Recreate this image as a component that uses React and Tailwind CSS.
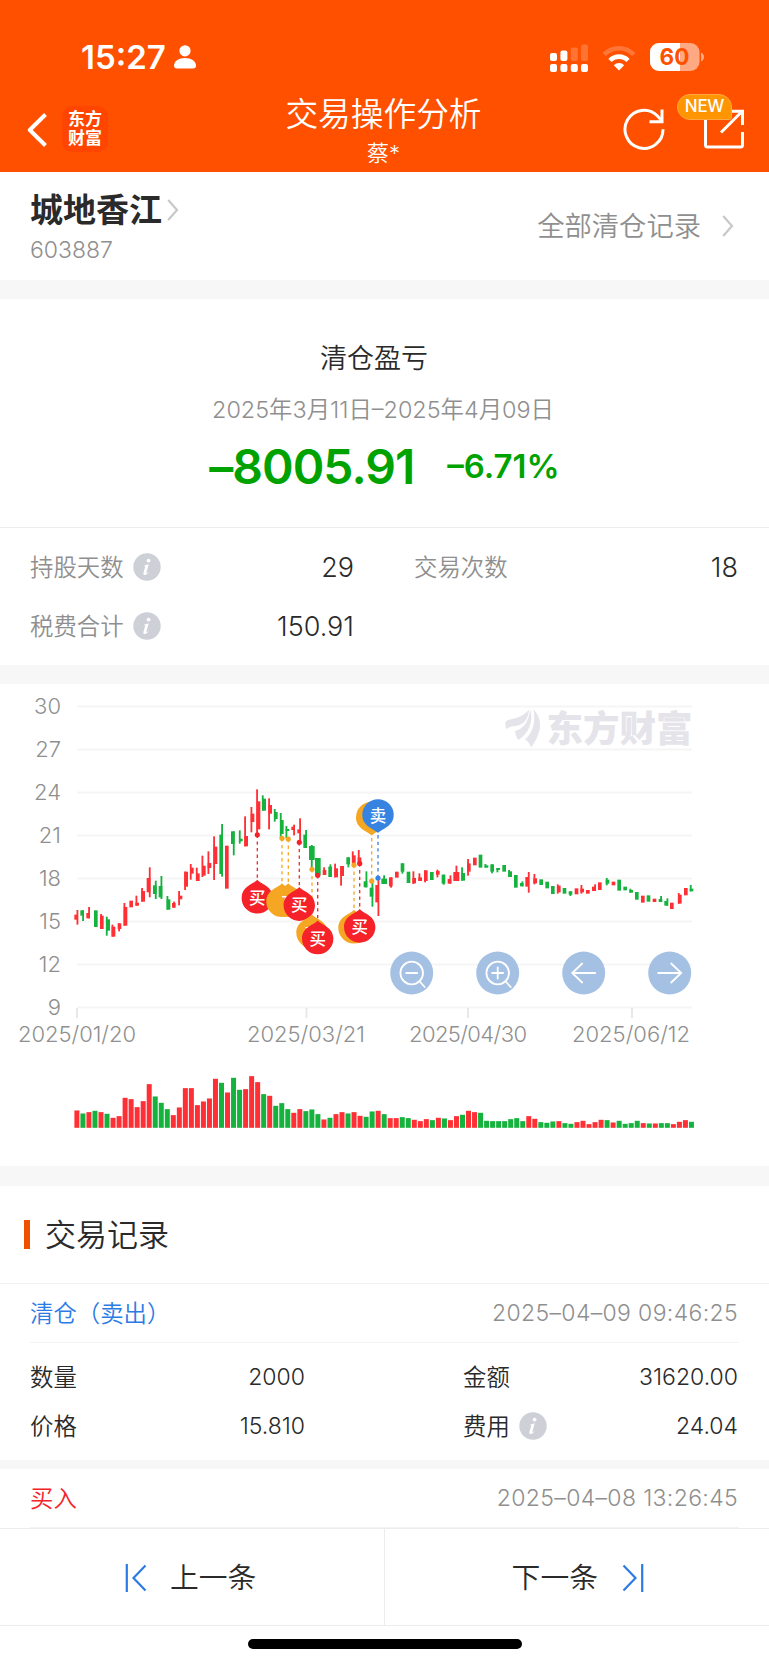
import React from 'react'

const RED = '#ff3035'
const GREEN = '#16b23e'

// [colour, x, top, bottom, wick x, wick top, wick bottom, width]
// Three units per pixel, each group is shifted right by dx
const candleGroups = [
    {
        dx: 180,
        bars: [
            ['r', 43, 434, 449, 52, 420, 464], ['g', 61, 421, 437, 69, 421, 453], ['r', 79, 429, 445, 87, 411, 445],
            ['g', 102, 421, 471], ['r', 120, 437, 477, 123, 432, 477], ['g', 139, 448, 482, 140, 440, 497],
            ['r', 155, 470, 500, 157, 464, 500], ['r', 173, 460, 477, 177, 460, 484], ['r', 191, 411, 467, 193, 399, 467],
            ['r', 208, 392, 412], ['r', 226, 398, 407, 229, 377, 407], ['r', 244, 363, 395, 246, 354, 395],
            ['r', 260, 324, 367, 269, 292, 382], ['g', 279, 346, 372, 287, 332, 387], ['g', 296, 348, 382, 304, 318, 387],
            ['g', 320, 388, 419, 322, 378, 419], ['r', 336, 399, 413, 342, 395, 413], ['r', 356, 377, 388, 357, 363, 406],
            ['r', 373, 305, 350, 375, 305, 360], ['r', 390, 293, 311, 392, 282, 329], ['r', 408, 310, 333, 410, 293, 333],
            ['r', 426, 287, 317, 427, 257, 321], ['r', 443, 279, 294, 445, 244, 312], ['r', 461, 230, 282, 462, 199, 330],
            ['g', 478, 194, 312, 486, 162, 320], ['r', 495, 227, 356], ['g', 513, 184, 222, 521, 184, 256],
            ['g', 537, 206, 214, 539, 181, 221], ['r', 553, 198, 229, 555, 139, 229], ['r', 572, 131, 156, 574, 111, 187],
            ['r', 590, 94, 178, 591, 58, 192],
        ],
    },
    {
        dx: 660,
        bars: [
            ['g', 127, 86, 122, 128, 76, 122], ['r', 145, 105, 131, 147, 85, 178], ['g', 162, 126, 147, 164, 117, 155],
            ['g', 180, 150, 192, 182, 129, 205], ['g', 197, 177, 183, 199, 168, 205], ['r', 214, 170, 180, 222, 164, 196],
            ['r', 232, 178, 190, 240, 145, 214], ['g', 250, 194, 234, 258, 180, 234], ['g', 267, 228, 270, 275, 225, 297, 17],
            ['g', 285, 264, 316, 293, 264, 316, 17], ['r', 308, 300, 315, 312, 292, 315], ['g', 325, 290, 321, 331, 283, 321],
            ['r', 343, 295, 322, 345, 281, 322], ['r', 361, 288, 318, 363, 288, 347], ['g', 379, 262, 283, 385, 262, 292],
            ['r', 396, 256, 280, 398, 244, 280], ['r', 413, 262, 282, 416, 240, 282], ['g', 431, 334, 352, 439, 304, 352],
            ['g', 449, 353, 380, 457, 333, 410], ['r', 466, 345, 397, 475, 330, 438], ['g', 484, 326, 342, 492, 316, 342, 17],
            ['r', 507, 322, 349, 513, 322, 353], ['r', 525, 305, 323],
        ],
    },
    {
        dx: 1200,
        bars: [
            ['g', 2, 280, 305, 7, 280, 311], ['g', 20, 305, 339], ['r', 37, 324, 340, 40, 304, 342], ['r', 55, 322, 333, 58, 310, 333],
            ['r', 72, 301, 333, 75, 301, 337], ['g', 90, 306, 330], ['r', 108, 303, 314, 112, 299, 322],
            ['g', 125, 314, 341, 131, 314, 344], ['r', 143, 327, 341, 151, 316, 341], ['r', 160, 306, 333, 169, 287, 333, 18],
            ['g', 184, 309, 332, 186, 292, 332], ['r', 201, 280, 305, 204, 267, 317], ['r', 219, 263, 286],
            ['g', 236, 254, 293], ['g', 254, 286, 293, 256, 282, 293], ['g', 271, 283, 305, 276, 283, 310],
            ['g', 289, 294, 300, 292, 294, 307], ['g', 307, 285, 305], ['g', 325, 304, 321, 327, 300, 321],
            ['g', 342, 315, 353], ['g', 360, 339, 349, 367, 334, 349], ['r', 376, 321, 350, 386, 306, 368],
            ['r', 400, 325, 340, 403, 312, 343], ['g', 418, 328, 345], ['g', 436, 335, 355], ['g', 453, 348, 372],
            ['r', 471, 347, 367, 473, 343, 371], ['g', 488, 354, 371], ['g', 506, 364, 374, 511, 364, 378],
            ['r', 524, 355, 373], ['r', 541, 356, 367, 544, 345, 371], ['r', 558, 360, 371], ['r', 576, 350, 363, 585, 343, 363],
            ['r', 594, 337, 360], ['g', 617, 329, 341, 620, 324, 346], ['r', 635, 335, 346], ['g', 652, 329, 362],
            ['g', 670, 350, 361], ['g', 688, 360, 368, 691, 356, 368], ['g', 705, 366, 389], ['r', 723, 377, 398],
            ['g', 740, 376, 395], ['r', 758, 386, 396], ['g', 776, 387, 396, 783, 378, 396], ['g', 793, 393, 407, 802, 385, 407],
            ['r', 810, 398, 417], ['r', 834, 374, 401, 836, 369, 401], ['r', 852, 354, 376], ['g', 869, 356, 364, 872, 345, 364],
        ],
    },
]

// Bar heights in thirds of a pixel
const volumes = (
    'r52 g43 r47 g51 r47 g42 r30 r35 r90 r86 r62 r80 r131 g94 g75 g56 r38 r61 r119 r119 r68 r79 r88 r147 g135 r106 ' +
    'g150 g114 r116 r155 r137 g101 r96 g66 g74 g56 r45 r56 g50 g55 g41 r25 g30 r41 r47 g43 r47 r36 g33 g49 r51 g41 ' +
    'r29 r29 g32 g29 r24 r20 r26 g23 r30 g28 r23 r35 g39 r51 r47 g45 g21 g20 g20 g20 g26 g29 g20 r35 r27 g17 g15 g19 ' +
    'r20 g14 g12 r17 r21 r11 r17 r24 g23 r16 g21 g12 g14 g21 r14 g13 r13 g14 g14 r11 r18 r23 g18'
).split(' ')

const gridLines = [
    [30, 706.5], [27, 749.5], [24, 792.5], [21, 835.5], [18, 878.5], [15, 921.5], [12, 964.5], [9, 1007.5],
]

// [label, tick x, text x]
const dates = [
    ['2025/01/20', 77, 77], ['2025/03/21', 306.5, 306], ['2025/04/30', 468, 468], ['2025/06/12', 632, 631],
]

// Order matters, later pins cover earlier ones
const pins = [
    { x: 257.3, y: 897.3, dot: 834.8, color: '#f5222a', label: '买' },
    { x: 282, y: 900.8, dot: 838.3, color: '#f5a623' },
    { x: 288.3, y: 900.8, dot: 839, color: '#f5a623', label: 'T' },
    { x: 299.3, y: 904.6, dot: 842.3, color: '#f5222a', label: '买' },
    { x: 312, y: 932, dot: 869.3, color: '#f5a623', label: 'T' },
    { x: 317.7, y: 938, dot: 875.3, color: '#f5222a', label: '买' },
    { x: 354, y: 927.2, dot: 865, color: '#f5a623' },
    { x: 359.7, y: 926.4, dot: 863.5, color: '#f5222a', label: '买' },
    { x: 371.7, y: 818, dot: 881, color: '#f5a623', down: true },
    { x: 378, y: 815.5, dot: 878, color: '#3683e2', label: '卖', down: true },
]

const BackIcon = () => (
    <svg width="20" height="34" viewBox="0 0 20 34" fill="none" stroke="white" strokeWidth="4">
        <path d="M18.5 1.5 2.8 17l15.7 15.5" strokeLinejoin="round" />
    </svg>
)

const Chevron = () => (
    <svg width="12" height="22" viewBox="0 0 12 22" fill="none" stroke="#c8c8c8" strokeWidth="2.2">
        <path d="M1.2 1 10 11 1.2 21" />
    </svg>
)

const InfoIcon = () => (
    <svg width="28" height="28" viewBox="0 0 28 28">
        <circle cx="14" cy="14" r="13.7" fill="#cdd0d7" />
        <circle cx="15.6" cy="7.6" r="1.9" fill="white" />
        <path d="M11.3 12.4c1.6 0 2.8-.5 3.9-1.1l.5.3-2.4 8.1c-.2.8.5.7 1.8-.5l.4.4c-1.5 1.8-2.9 2.5-4 2.3-1.1-.2-1.3-1.1-1-2.2l1.8-6.1-1.2-.5z" fill="white" />
    </svg>
)

const StatusBar = () => (
    <div className="flex h-[88px] items-end justify-between pb-[15px] pl-[81px] pr-[64px] text-white">
        <div className="flex items-center">
            <span className="w-[93px] pt-px text-[33px] font-semibold leading-8">15:27</span>
            <svg width="22" height="24" viewBox="0 0 22 24" fill="white">
                <circle cx="11" cy="5.8" r="5.6" />
                <path d="M0 20.5C0 16 5 13 11 13s11 3 11 7.500c0 2-1 3-3 3H3c-2 0-3-1-3-3z" />
            </svg>
        </div>
        <div className="flex items-center">
            <svg width="38" height="28" viewBox="0 0 38 28" fill="white">
                <rect x="0" y="9" width="7" height="8" rx="2" />
                <rect x="10.400" y="6.500" width="7" height="10.500" rx="2" />
                <rect x="20.800" y="3.500" width="7" height="13.500" rx="2" opacity=".2" />
                <rect x="31" y="0.500" width="7" height="16.500" rx="2" opacity=".2" />
                {[0, 10.4, 20.8, 31].map((x) => (
                    <rect key={x} x={x} y="20" width="7" height="8" rx="2" />
                ))}
            </svg>
            <svg className="ml-[14px]" width="34" height="26" viewBox="0 0 34 26" fill="none" stroke="white" strokeWidth="4.600">
                <path d="M2.200 9.500a20.500 20.500 0 0 1 29.600 0" opacity=".22" />
                <path d="M8 15.500a12.500 12.500 0 0 1 18 0" />
                <path d="M17 25.500 11.800 20.200a7.500 7.500 0 0 1 10.400 0z" fill="white" stroke="none" />
            </svg>
            <svg className="mb-[2px] ml-[14px]" width="55" height="28" viewBox="0 0 55 28">
                <clipPath id="battery">
                    <rect x="0" y="0" width="49.500" height="28" rx="9" />
                </clipPath>
                <g clipPath="url(#battery)">
                    <rect width="50" height="28" fill="#ffa982" />
                    <rect width="30" height="28" fill="white" />
                </g>
                <path d="M51 9.500c4 1.500 4 7.500 0 9z" fill="#ffa982" />
                <text x="24.500" y="22" textAnchor="middle" fontSize="22.500" fontWeight="650" fill="#ff5000">60</text>
            </svg>
        </div>
    </div>
)

const Header = () => (
    <header className="h-[172px] bg-[#ff5000] text-white">
        <StatusBar />
        <div className="flex h-[84px] justify-between">
            <div className="flex w-[240px] items-start pl-[27px] pt-[18px]">
                <div className="mt-[7px]"><BackIcon /></div>
                <div className="ml-[15px] flex h-[46px] w-[46px] flex-col items-center justify-center rounded-[10px] bg-[#ff4500] text-[17px] font-bold leading-[19px]">
                    <span>东方</span>
                    <span>财富</span>
                </div>
            </div>
            <div className="mr-[2px] flex flex-col items-center">
                <h1 className="mt-[5px] text-[32.700px] font-[350] leading-[42px]">交易操作分析</h1>
                <p className="mt-[6px] text-[22px] font-[350] leading-[24px]">蔡*</p>
            </div>
            <div className="relative flex w-[240px] justify-end gap-[38px] pr-[25px] pt-[20px]">
                <svg width="42" height="42" viewBox="0 0 42 42" fill="none" stroke="white" strokeWidth="3">
                    <path d="M40 21.200A19 19 0 1 1 34.500 8L39 13" />
                    <path d="M39 1.500v12.200H26.500" />
                </svg>
                <svg width="41" height="41" viewBox="0 0 41 41" fill="none" stroke="white" strokeWidth="3">
                    <path d="M2.500 10v27a2 2 0 0 0 2 2h33a2 2 0 0 0 2-2V24" />
                    <path d="M27 3.300h12.500V17M39.200 3.300 18 24.500" />
                </svg>
                <span className="absolute right-[37px] top-[6px] flex h-[26px] w-[55px] items-center justify-center rounded-[13px] rounded-br-[3px] border border-[#ffa940] bg-[#ff9500] text-[17px] font-medium tracking-[-0.3px]">
                    NEW
                </span>
            </div>
        </div>
    </header>
)

const Stat = ({ label, value, info }) => (
    <div className="flex h-[59px] items-center">
        <span className="text-[23.400px] font-[350] text-[#8f8f8f]">{label}</span>
        {info && <span className="mb-[2px] ml-[9px]"><InfoIcon /></span>}
        <span className="ml-auto pt-px text-[27px] font-[350]">{value}</span>
    </div>
)

const Pin = ({ x, y, color, label, down }) => (
    <g transform={`translate(${x} ${y})`}>
        <path
            d="M0-17.500C3-13.500 15.700-11 15.700.6A15.700 15.700 0 0 1-15.700.6C-15.700-11-3-13.500 0-17.500z"
            transform={down ? 'rotate(180)' : undefined}
            fill={color}
        />
        {label === 'T' && <text x="-2.500" y="5" textAnchor="middle" fontSize="13" fontWeight="500" fill="white">T</text>}
        {label && label !== 'T' && <text y="6.500" textAnchor="middle" fontSize="16.500" fontWeight="500" fill="white">{label}</text>}
    </g>
)

const RoundButton = ({ x, children }) => (
    <g transform={`translate(${x} 973)`} fill="none" stroke="white" strokeWidth="1.800" strokeLinecap="round">
        <circle r="21.500" fill="#a4c1e4" stroke="none" />
        {children}
    </g>
)

const TradeChart = () => (
    <svg width="769" height="482" viewBox="0 684 769 482" className="block">
        {/* grid + axis */}
        {gridLines.map(([value, y]) => (
            <g key={value}>
                <path d={`M77 ${y}H692`} stroke="#f5f5f5" strokeWidth="2" />
                <text x="61" y={y + 7.7} textAnchor="end" fontSize="22" fontWeight="350" fill="#8f8f8f">{value}</text>
            </g>
        ))}
        {dates.map(([label, tick, x]) => (
            <g key={label}>
                <path d={`M${tick} 1008v10`} stroke="#e8e8e8" strokeWidth="2" />
                <text x={x} y="1042" textAnchor="middle" fontSize="22" fontWeight="350" textLength="118" fill="#8f8f8f">{label}</text>
            </g>
        ))}

        {/* watermark */}
        <g fill="#e4e4ea">
            <path d="M505.700 721.500c5-4 14-1 23.500-12-1 10-6 16-14 16.500-4 .3-6 1-9 3-1-2-1-5-.5-7.500z" />
            <path d="M515 731c9-2 13-9 15.500-21.500 3 13-2 24-12 30.500-2-2-3-5-3.500-9z" />
            <path d="M533.500 709.500c10 10 8 24-2.500 38-1-4-3-6-6-8 8-7 11-17 8.500-30z" />
            <text x="546.500" y="742" fontSize="36.500" fontWeight="900" textLength="146">东方财富</text>
        </g>

        <g transform="translate(0 770) scale(.33333)">
            {candleGroups.map(({ dx, bars }) =>
                bars.map(([c, x, top, bottom, wx, wTop, wBottom, w = 11]) => (
                    <g key={dx + x} fill={c === 'r' ? RED : GREEN}>
                        <rect x={dx + x} y={top} width={w} height={bottom - top} />
                        {wx && <rect x={dx + wx - 2.5} y={wTop} width="5.500" height={wBottom - wTop} />}
                    </g>
                ))
            )}
        </g>

        {volumes.map((v, i) => {
            const h = Number(v.slice(1)) / 3
            return <rect key={i} x={74.4 + i * 6.025} y={1127.8 - h} width="5" height={h} fill={v[0] === 'r' ? RED : GREEN} />
        })}

        {pins.map((p) => (
            <g key={p.x}>
                <path d={`M${p.x} ${p.dot}V${p.y}`} stroke={p.color} strokeWidth="1.300" strokeDasharray="3.300 3.300" />
                <circle cx={p.x} cy={p.dot} r="2.600" fill={p.color} />
            </g>
        ))}
        {pins.map((p) => <Pin key={p.x} {...p} />)}

        <RoundButton x={411.7}>
            <circle r="11.300" />
            <path d="M-5.500 0h11M8 8.500l5 5.500" />
        </RoundButton>
        <RoundButton x={497.7}>
            <circle r="11.300" />
            <path d="M-5.500 0h11M0-5.500v11M8 8.500l5 5.500" />
        </RoundButton>
        <RoundButton x={583.7}>
            <path d="M11.500 0h-23M-1.500-9.500-11.500 0l10 9.500" />
        </RoundButton>
        <RoundButton x={669.7}>
            <path d="M-11.500 0h23M1.500-9.500 11.500 0l-10 9.500" />
        </RoundButton>
    </svg>
)

const RecordHead = ({ title, time, color }) => (
    <div className="mx-[30px] flex h-[59px] items-center justify-between border-b border-[#f3f3f3] pr-px pt-px">
        <span className={`text-[23.400px] font-[350] ${color}`}>{title}</span>
        <span className="text-[23px] font-[350] tracking-[0.35px] text-[#8f8f8f]">{time}</span>
    </div>
)

const RecordRow = ({ left, right, info }) => (
    <div className="flex h-[49px] items-center font-[350]">
        <div className="flex w-[275px] items-center justify-between">
            <span className="text-[23.400px]">{left[0]}</span>
            <span className="text-[23px]">{left[1]}</span>
        </div>
        <div className="ml-[158px] flex flex-1 items-center">
            <span className="text-[23.400px]">{right[0]}</span>
            {info && <span className="ml-[9px]"><InfoIcon /></span>}
            <span className="ml-auto text-[23px]">{right[1]}</span>
        </div>
    </div>
)

const App = () => {
    return (
        <div className="h-[1665px] w-[769px] overflow-hidden bg-white font-['Inter','Noto_Sans_CJK_SC',sans-serif] text-[#2a2a2a]">
            <Header />

            {/* Stock name */}
            <section className="flex h-[108px] items-start justify-between pl-[30px] pr-[35px]">
                <div>
                    <div className="mt-[16px] flex h-[44px] items-center">
                        <h2 className="text-[33px] font-bold leading-[44px]">城地香江</h2>
                        <span className="ml-[5px]"><Chevron /></span>
                    </div>
                    <p className="mt-[4px] text-[23px] font-[350] leading-[28px] text-[#8f8f8f]">603887</p>
                </div>
                <div className="mt-[37px] flex h-[36px] items-center">
                    <span className="mr-px text-[27.300px] font-[350] text-[#8f8f8f]">全部清仓记录</span>
                    <span className="mb-[2px] ml-[20px]"><Chevron /></span>
                </div>
            </section>
            <div className="h-[19px] bg-[#f7f7f7]" />

            {/* Profit and loss */}
            <section className="flex h-[229px] flex-col items-center border-b border-[#ececec]">
                <h3 className="mr-[21px] mt-[40px] text-[27px] font-[350] leading-[40px]">清仓盈亏</h3>
                <p className="mr-[3px] mt-[15px] text-[23.400px] font-[350] leading-[32px] text-[#8f8f8f]">2025年3月11日–2025年4月09日</p>
                <div className="mt-[11px] flex h-[60px] items-center gap-[33px] font-semibold text-[#00a200]">
                    <span className="text-[48px] tracking-[-1px]">–8005.91</span>
                    <span className="text-[33px]">–6.71%</span>
                </div>
            </section>
            <section className="grid h-[137px] grid-cols-2 content-start gap-x-[60px] pl-[30px] pr-[31px] pt-[10px]">
                <Stat label="持股天数" value="29" info />
                <Stat label="交易次数" value="18" />
                <Stat label="税费合计" value="150.91" info />
            </section>
            <div className="h-[19px] bg-[#f7f7f7]" />

            <TradeChart />
            <div className="h-[20px] bg-[#f7f7f7]" />

            {/* Records */}
            <section>
                <div className="flex h-[98px] items-center border-b border-[#f0f0f0] pl-[24px]">
                    <span className="h-[29px] w-[6px] bg-[#ee5000]" />
                    <h3 className="ml-[15px] mt-[2px] text-[31px] font-[350]">交易记录</h3>
                </div>
                <RecordHead title="清仓（卖出）" time="2025–04–09 09:46:25" color="text-[#2c7be5]" />
                <div className="h-[117px] pl-[30px] pr-[31px] pt-[10px]">
                    <RecordRow left={['数量', '2000']} right={['金额', '31620.00']} />
                    <RecordRow left={['价格', '15.810']} right={['费用', '24.04']} info />
                </div>
                <div className="h-[9px] bg-[#f7f7f7]" />
                <RecordHead title="买入" time="2025–04–08 13:26:45" color="text-[#f5222a]" />
            </section>

            {/* Bottom bar */}
            <nav className="grid h-[98px] grid-cols-2 border-y border-[#ececec] text-[28.800px] font-[350]">
                <button className="flex items-center border-r border-[#ececec] pl-[125px] pt-px">
                    <svg width="22" height="28" viewBox="0 0 22 28" fill="none" stroke="#2c7be5" strokeWidth="2.200">
                        <path d="M1.800 0v28M20.500 1.500 8.500 14l12 12.500" />
                    </svg>
                    <span className="ml-[23px]">上一条</span>
                </button>
                <button className="flex items-center justify-end pr-[125px] pt-px">
                    <span className="mr-[24px]">下一条</span>
                    <svg width="22" height="28" viewBox="0 0 22 28" fill="none" stroke="#2c7be5" strokeWidth="2.200">
                        <path d="M20.200 0v28M1.500 1.500l12 12.500-12 12.500" />
                    </svg>
                </button>
            </nav>
            <div className="mx-auto mt-[13px] h-[10px] w-[274px] rounded-full bg-black" />
        </div>
    )
}

export default App
